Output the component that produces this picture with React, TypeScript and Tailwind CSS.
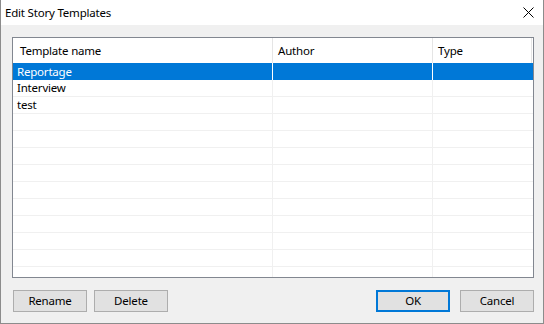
import React from "react";

const rows = ["Reportage", "Interview", "test", "", "", "", "", "", "", "", "", "", ""];

function Btn({ label, primary }: { label: string; primary?: boolean }) {
  return (
    <button
      className={
        "w-[74px] h-[22px] bg-[#e1e1e1] text-[11.5px] text-black flex items-center justify-center " +
        (primary ? "border-2 border-[#0078d7]" : "border border-[#adadad]")
      }
    >
      {label}
    </button>
  );
}

export default function App() {
  return (
    <div
      className="w-[544px] h-[324px] bg-[#f0f0f0] border-x border-b border-[#8c8c8c] flex flex-col overflow-hidden text-[11.5px] tracking-[-0.2px]"
      style={{ fontFamily: '"Noto Sans", "Segoe UI", sans-serif' }}
    >
      <div className="h-[25px] bg-white flex items-center justify-between pl-[4px] pr-[9px] shrink-0">
        <span className="text-black">Edit Story Templates</span>
        <svg width="11" height="11" viewBox="0 0 11 11">
          <path d="M0.5 0.5 L10.5 10.5 M10.5 0.5 L0.5 10.5" stroke="#000" strokeWidth="1" />
        </svg>
      </div>
      <div className="flex-1 flex flex-col pt-[12px] pl-[11px] pr-[9px] pb-[12px]">
        <div className="h-[241px] border border-[#828790] bg-white overflow-hidden">
          <div className="flex h-[25px] text-black">
            <div className="w-[260px] border-r border-[#e5e5e5] pl-[7px] flex items-center">Template name</div>
            <div className="w-[160px] border-r border-[#e5e5e5] pl-[5px] flex items-center">Author</div>
            <div className="w-[99px] border-r border-[#e5e5e5] pl-[5px] flex items-center">Type</div>
          </div>
          {rows.map((r, i) => {
            const sel = i === 0;
            return (
              <div
                key={i}
                className={
                  "flex h-[17px] " +
                  (sel ? "bg-[#0078d7] text-white" : "text-black border-b border-[#f0f0f0]")
                }
              >
                <div
                  className={
                    "w-[260px] pl-[4px] flex items-center leading-none border-r " +
                    (sel ? "border-white" : "border-[#f0f0f0]")
                  }
                >
                  {r}
                </div>
                <div className={"w-[160px] border-r " + (sel ? "border-white" : "border-[#f0f0f0]")} />
                <div className="w-[99px]" />
              </div>
            );
          })}
        </div>
        <div className="flex mt-[12px] pl-[1px]">
          <div className="flex gap-[7px]">
            <Btn label="Rename" />
            <Btn label="Delete" />
          </div>
          <div className="flex gap-[10px] ml-auto">
            <Btn label="OK" primary />
            <Btn label="Cancel" />
          </div>
        </div>
      </div>
    </div>
  );
}
